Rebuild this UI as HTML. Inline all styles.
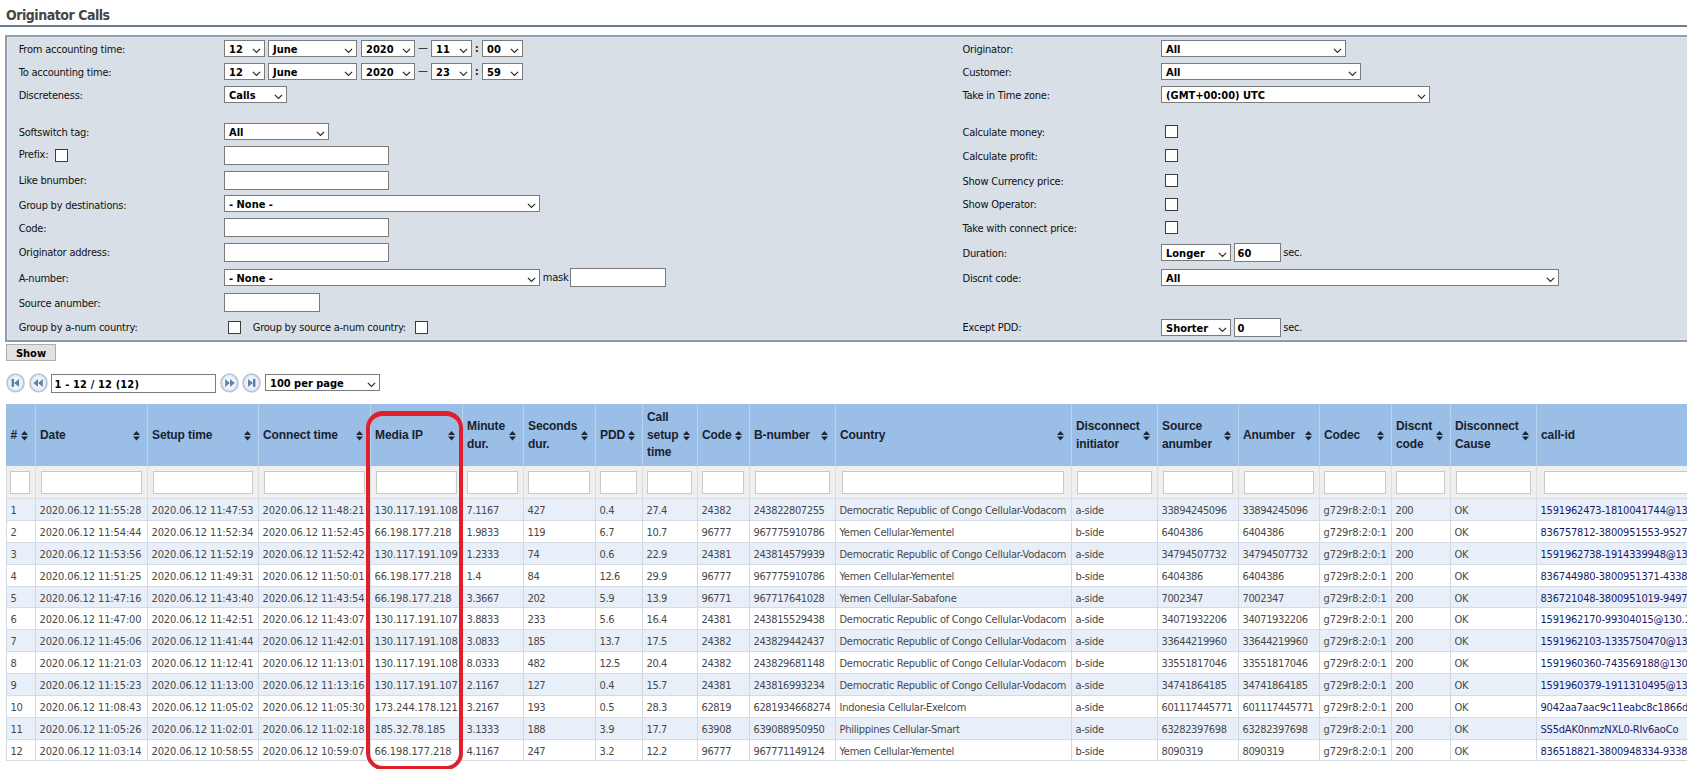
<!DOCTYPE html>
<html lang="en"><head><meta charset="utf-8"><title>Originator Calls</title>
<style>

html,body{margin:0;padding:0;}
body{width:1687px;height:769px;overflow:hidden;background:#fff;position:relative;
 font-family:"DejaVu Sans Condensed", "Liberation Sans", sans-serif;font-size:11px;letter-spacing:-0.22px;color:#111;}
.abs{position:absolute;}
h1{position:absolute;left:6px;top:6px;margin:0;font-size:14px;line-height:18px;font-weight:bold;color:#454545;letter-spacing:-0.47px;white-space:nowrap;}
.hr{position:absolute;left:0;top:25px;width:1687px;height:2px;background:#687c8f;}
.panel{position:absolute;left:5px;top:35px;width:1700px;height:307px;box-sizing:border-box;background:#d8dfe7;border:2px solid #8f9eae;border-bottom-color:#8b9baa;box-shadow:inset 0 0 0 1px #dfe7ef;}
.lb{position:absolute;white-space:nowrap;line-height:16px;height:16px;}
.sel{position:absolute;box-sizing:border-box;height:17px;border:1px solid #7b7b7b;background:#fff;font-weight:bold;color:#000;line-height:15px;padding:1px 0 0 4px;white-space:nowrap;overflow:hidden;letter-spacing:0;}
.sel svg{position:absolute;right:3.5px;top:7.4px;}
.inp{position:absolute;box-sizing:border-box;border:1px solid #7b7b7b;background:#fff;font-weight:bold;color:#000;padding-left:2.5px;white-space:nowrap;overflow:hidden;letter-spacing:0;}
.cb{position:absolute;box-sizing:border-box;width:13px;height:13px;border:1px solid #3c3c3c;background:#fff;}
.btn{position:absolute;box-sizing:border-box;border:1px solid #adadad;background:#e1e1e1;font-weight:bold;color:#000;text-align:center;letter-spacing:0;}
table{position:absolute;left:6px;top:404px;border-collapse:separate;border-spacing:0;table-layout:fixed;}
th{box-sizing:border-box;height:62px;background:#9bbee6;border-left:1px solid #b9d3ef;padding:1px 0 0 4px;text-align:left;vertical-align:middle;
 font-family:"Liberation Sans", sans-serif;font-size:12px;font-weight:bold;line-height:17.8px;color:#18222f;letter-spacing:-0.1px;white-space:nowrap;position:relative;}
th:first-child{border-left-color:#9bbee6;padding-left:3.5px;}
th svg{position:absolute;right:7px;top:27px;}
tr.f td{box-sizing:border-box;height:33px;background:#efefef;border-left:1px solid #dcdcdc;border-bottom:1px solid #d9dde3;padding:0;position:relative;}
tr.f td div{position:absolute;left:4px;right:5px;top:5px;height:23px;box-sizing:border-box;border:1px solid #c9c9c9;background:#fff;}
tr.r td{box-sizing:border-box;height:22px;border-left:1px solid #d3d9e1;border-bottom:1px solid #d5dbe4;padding:3px 0 0 3.5px;white-space:nowrap;overflow:hidden;color:#484848;line-height:18px;vertical-align:top;}
tr.s td{height:21px;line-height:17px;}
tr.r td.d{letter-spacing:-0.12px;}
tr.r td.n{letter-spacing:-0.38px;}
tr.r td.t{letter-spacing:-0.26px;}
tr.r td.c{letter-spacing:-0.1px;}
tr.r td.l{letter-spacing:-0.2px;}
tr.o td{background:#e8eff9;}
tr.r td.l{color:#1a1a6a;}
.red{position:absolute;left:365.5px;top:410.5px;width:97px;height:359.5px;box-sizing:border-box;border:4.7px solid #e01f2b;border-top-width:5.3px;border-radius:17px;}

</style></head><body>
<svg width="0" height="0" style="position:absolute"><defs><radialGradient id="pg" cx="50%" cy="50%" r="50%"><stop offset="0" stop-color="#ffffff"/><stop offset="0.55" stop-color="#f1f6fd"/><stop offset="1" stop-color="#d3e3f7"/></radialGradient></defs></svg>
<h1>Originator Calls</h1>
<div class="hr"></div>
<div class="panel"></div>
<div class="lb" style="left:18.7px;top:42px">From accounting time:</div>
<div class="lb" style="left:18.7px;top:65px">To accounting time:</div>
<div class="lb" style="left:18.7px;top:88px">Discreteness:</div>
<div class="lb" style="left:18.7px;top:125px">Softswitch tag:</div>
<div class="lb" style="left:18.7px;top:147px">Prefix:</div>
<div class="lb" style="left:18.7px;top:173px">Like bnumber:</div>
<div class="lb" style="left:18.7px;top:198px">Group by destinations:</div>
<div class="lb" style="left:18.7px;top:221px">Code:</div>
<div class="lb" style="left:18.7px;top:245px">Originator address:</div>
<div class="lb" style="left:18.7px;top:271px">A-number:</div>
<div class="lb" style="left:18.7px;top:296px">Source anumber:</div>
<div class="lb" style="left:18.7px;top:320px">Group by a-num country:</div>
<div class="sel" style="left:224px;top:40px;width:41px">12<svg width="9" height="6" viewBox="0 0 9 6"><path d="M0.9 0.9 L4.5 4.5 L8.1 0.9" fill="none" stroke="#262626" stroke-width="1.15"/></svg></div>
<div class="sel" style="left:268px;top:40px;width:89px">June<svg width="9" height="6" viewBox="0 0 9 6"><path d="M0.9 0.9 L4.5 4.5 L8.1 0.9" fill="none" stroke="#262626" stroke-width="1.15"/></svg></div>
<div class="sel" style="left:361px;top:40px;width:54px">2020<svg width="9" height="6" viewBox="0 0 9 6"><path d="M0.9 0.9 L4.5 4.5 L8.1 0.9" fill="none" stroke="#262626" stroke-width="1.15"/></svg></div>
<div class="lb" style="left:418px;top:40px;letter-spacing:0">—</div>
<div class="sel" style="left:431px;top:40px;width:41px">11<svg width="9" height="6" viewBox="0 0 9 6"><path d="M0.9 0.9 L4.5 4.5 L8.1 0.9" fill="none" stroke="#262626" stroke-width="1.15"/></svg></div>
<div class="lb" style="left:475px;top:41px;font-weight:bold;font-size:10px">:</div>
<div class="sel" style="left:482px;top:40px;width:41px">00<svg width="9" height="6" viewBox="0 0 9 6"><path d="M0.9 0.9 L4.5 4.5 L8.1 0.9" fill="none" stroke="#262626" stroke-width="1.15"/></svg></div>
<div class="sel" style="left:224px;top:63px;width:41px">12<svg width="9" height="6" viewBox="0 0 9 6"><path d="M0.9 0.9 L4.5 4.5 L8.1 0.9" fill="none" stroke="#262626" stroke-width="1.15"/></svg></div>
<div class="sel" style="left:268px;top:63px;width:89px">June<svg width="9" height="6" viewBox="0 0 9 6"><path d="M0.9 0.9 L4.5 4.5 L8.1 0.9" fill="none" stroke="#262626" stroke-width="1.15"/></svg></div>
<div class="sel" style="left:361px;top:63px;width:54px">2020<svg width="9" height="6" viewBox="0 0 9 6"><path d="M0.9 0.9 L4.5 4.5 L8.1 0.9" fill="none" stroke="#262626" stroke-width="1.15"/></svg></div>
<div class="lb" style="left:418px;top:63px;letter-spacing:0">—</div>
<div class="sel" style="left:431px;top:63px;width:41px">23<svg width="9" height="6" viewBox="0 0 9 6"><path d="M0.9 0.9 L4.5 4.5 L8.1 0.9" fill="none" stroke="#262626" stroke-width="1.15"/></svg></div>
<div class="lb" style="left:475px;top:64px;font-weight:bold;font-size:10px">:</div>
<div class="sel" style="left:482px;top:63px;width:41px">59<svg width="9" height="6" viewBox="0 0 9 6"><path d="M0.9 0.9 L4.5 4.5 L8.1 0.9" fill="none" stroke="#262626" stroke-width="1.15"/></svg></div>
<div class="sel" style="left:224px;top:86px;width:63px">Calls<svg width="9" height="6" viewBox="0 0 9 6"><path d="M0.9 0.9 L4.5 4.5 L8.1 0.9" fill="none" stroke="#262626" stroke-width="1.15"/></svg></div>
<div class="sel" style="left:224px;top:123px;width:105px">All<svg width="9" height="6" viewBox="0 0 9 6"><path d="M0.9 0.9 L4.5 4.5 L8.1 0.9" fill="none" stroke="#262626" stroke-width="1.15"/></svg></div>
<div class="cb" style="left:55px;top:149px"></div>
<div class="inp" style="left:224px;top:146px;width:165px;height:19px;line-height:17px;padding-top:1px;letter-spacing:0px"></div>
<div class="inp" style="left:224px;top:171px;width:165px;height:19px;line-height:17px;padding-top:1px;letter-spacing:0px"></div>
<div class="sel" style="left:224px;top:195px;width:316px">- None -<svg width="9" height="6" viewBox="0 0 9 6"><path d="M0.9 0.9 L4.5 4.5 L8.1 0.9" fill="none" stroke="#262626" stroke-width="1.15"/></svg></div>
<div class="inp" style="left:224px;top:218px;width:165px;height:19px;line-height:17px;padding-top:1px;letter-spacing:0px"></div>
<div class="inp" style="left:224px;top:243px;width:165px;height:19px;line-height:17px;padding-top:1px;letter-spacing:0px"></div>
<div class="sel" style="left:224px;top:269px;width:316px">- None -<svg width="9" height="6" viewBox="0 0 9 6"><path d="M0.9 0.9 L4.5 4.5 L8.1 0.9" fill="none" stroke="#262626" stroke-width="1.15"/></svg></div>
<div class="lb" style="left:542.8px;top:270px">mask</div>
<div class="inp" style="left:570px;top:268px;width:96px;height:19px;line-height:17px;padding-top:1px;letter-spacing:0px"></div>
<div class="inp" style="left:224px;top:293px;width:96px;height:19px;line-height:17px;padding-top:1px;letter-spacing:0px"></div>
<div class="cb" style="left:228px;top:321px"></div>
<div class="lb" style="left:252.7px;top:320px">Group by source a-num country:</div>
<div class="cb" style="left:415px;top:321px"></div>
<div class="lb" style="left:962.5px;top:42px">Originator:</div>
<div class="lb" style="left:962.5px;top:65px">Customer:</div>
<div class="lb" style="left:962.5px;top:88px">Take in Time zone:</div>
<div class="lb" style="left:962.5px;top:125px">Calculate money:</div>
<div class="lb" style="left:962.5px;top:149px">Calculate profit:</div>
<div class="lb" style="left:962.5px;top:174px">Show Currency price:</div>
<div class="lb" style="left:962.5px;top:197px">Show Operator:</div>
<div class="lb" style="left:962.5px;top:221px">Take with connect price:</div>
<div class="lb" style="left:962.5px;top:246px">Duration:</div>
<div class="lb" style="left:962.5px;top:271px">Discnt code:</div>
<div class="lb" style="left:962.5px;top:320px">Except PDD:</div>
<div class="sel" style="left:1161px;top:40px;width:185px">All<svg width="9" height="6" viewBox="0 0 9 6"><path d="M0.9 0.9 L4.5 4.5 L8.1 0.9" fill="none" stroke="#262626" stroke-width="1.15"/></svg></div>
<div class="sel" style="left:1161px;top:63px;width:200px">All<svg width="9" height="6" viewBox="0 0 9 6"><path d="M0.9 0.9 L4.5 4.5 L8.1 0.9" fill="none" stroke="#262626" stroke-width="1.15"/></svg></div>
<div class="sel" style="left:1161px;top:86px;width:269px">(GMT+00:00) UTC<svg width="9" height="6" viewBox="0 0 9 6"><path d="M0.9 0.9 L4.5 4.5 L8.1 0.9" fill="none" stroke="#262626" stroke-width="1.15"/></svg></div>
<div class="cb" style="left:1165px;top:125px"></div>
<div class="cb" style="left:1165px;top:149px"></div>
<div class="cb" style="left:1165px;top:174px"></div>
<div class="cb" style="left:1165px;top:198px"></div>
<div class="cb" style="left:1165px;top:221px"></div>
<div class="sel" style="left:1161px;top:244px;width:70px">Longer<svg width="9" height="6" viewBox="0 0 9 6"><path d="M0.9 0.9 L4.5 4.5 L8.1 0.9" fill="none" stroke="#262626" stroke-width="1.15"/></svg></div>
<div class="inp" style="left:1234px;top:243px;width:47px;height:19px;line-height:17px;padding-top:1px;letter-spacing:0px">60</div>
<div class="lb" style="left:1283.3px;top:245px">sec.</div>
<div class="sel" style="left:1161px;top:269px;width:398px">All<svg width="9" height="6" viewBox="0 0 9 6"><path d="M0.9 0.9 L4.5 4.5 L8.1 0.9" fill="none" stroke="#262626" stroke-width="1.15"/></svg></div>
<div class="sel" style="left:1161px;top:319px;width:70px">Shorter<svg width="9" height="6" viewBox="0 0 9 6"><path d="M0.9 0.9 L4.5 4.5 L8.1 0.9" fill="none" stroke="#262626" stroke-width="1.15"/></svg></div>
<div class="inp" style="left:1234px;top:318px;width:47px;height:19px;line-height:17px;padding-top:1px;letter-spacing:0px">0</div>
<div class="lb" style="left:1283.3px;top:320px">sec.</div>
<div class="btn" style="left:6px;top:344px;width:50px;height:17px;line-height:15px;padding-top:1px">Show</div>
<svg class="abs" style="left:5.800000000000001px;top:373px" width="19" height="20" viewBox="0 0 19 20"><ellipse cx="9.5" cy="9.9" rx="8.5" ry="8.9" fill="url(#pg)" stroke="#bcc4d0" stroke-width="1.6"/><g transform="translate(0,0.4)"><rect x="5.6" y="5.5" width="2.5" height="8" fill="#5d82aa"/><path d="M13 5.5 L13 13.5 L8.1 9.5Z" fill="#5d82aa"/></g></svg>
<svg class="abs" style="left:28.700000000000003px;top:373px" width="19" height="20" viewBox="0 0 19 20"><ellipse cx="9.5" cy="9.9" rx="8.5" ry="8.9" fill="url(#pg)" stroke="#bcc4d0" stroke-width="1.6"/><g transform="translate(0,0.4)"><path d="M9 5.5 L9 13.5 L4.3 9.5Z M13.8 5.5 L13.8 13.5 L9.1 9.5Z" fill="#5d82aa"/></g></svg>
<div class="inp" style="left:51px;top:374px;width:165px;height:19px;line-height:17px;padding-top:1px;letter-spacing:0.15px">1 - 12 / 12 (12)</div>
<svg class="abs" style="left:219.5px;top:373px" width="19" height="20" viewBox="0 0 19 20"><ellipse cx="9.5" cy="9.9" rx="8.5" ry="8.9" fill="url(#pg)" stroke="#bcc4d0" stroke-width="1.6"/><g transform="translate(0,0.4)"><path d="M5.2 5.5 L5.2 13.5 L9.9 9.5Z M10 5.5 L10 13.5 L14.7 9.5Z" fill="#5d82aa"/></g></svg>
<svg class="abs" style="left:241.8px;top:373px" width="19" height="20" viewBox="0 0 19 20"><ellipse cx="9.5" cy="9.9" rx="8.5" ry="8.9" fill="url(#pg)" stroke="#bcc4d0" stroke-width="1.6"/><g transform="translate(0,0.4)"><rect x="10.9" y="5.5" width="2.5" height="8" fill="#5d82aa"/><path d="M6 5.5 L6 13.5 L10.9 9.5Z" fill="#5d82aa"/></g></svg>
<div class="sel" style="left:265px;top:374px;width:115px">100 per page<svg width="9" height="6" viewBox="0 0 9 6"><path d="M0.9 0.9 L4.5 4.5 L8.1 0.9" fill="none" stroke="#262626" stroke-width="1.15"/></svg></div>
<table style="width:1754px"><colgroup>
<col style="width:29px">
<col style="width:112px">
<col style="width:111px">
<col style="width:112px">
<col style="width:92px">
<col style="width:61px">
<col style="width:72px">
<col style="width:47px">
<col style="width:55px">
<col style="width:52px">
<col style="width:86px">
<col style="width:236px">
<col style="width:86px">
<col style="width:81px">
<col style="width:81px">
<col style="width:72px">
<col style="width:59px">
<col style="width:86px">
<col style="width:224px">
</colgroup>
<tr>
<th>#<svg width="7" height="10" viewBox="0 0 7 10"><path d="M0 4 L3.5 0 L7 4Z M0 5.6 L7 5.6 L3.5 9.6Z" fill="#1b2636"/></svg></th>
<th>Date<svg width="7" height="10" viewBox="0 0 7 10"><path d="M0 4 L3.5 0 L7 4Z M0 5.6 L7 5.6 L3.5 9.6Z" fill="#1b2636"/></svg></th>
<th>Setup time<svg width="7" height="10" viewBox="0 0 7 10"><path d="M0 4 L3.5 0 L7 4Z M0 5.6 L7 5.6 L3.5 9.6Z" fill="#1b2636"/></svg></th>
<th>Connect time<svg width="7" height="10" viewBox="0 0 7 10"><path d="M0 4 L3.5 0 L7 4Z M0 5.6 L7 5.6 L3.5 9.6Z" fill="#1b2636"/></svg></th>
<th>Media IP<svg width="7" height="10" viewBox="0 0 7 10"><path d="M0 4 L3.5 0 L7 4Z M0 5.6 L7 5.6 L3.5 9.6Z" fill="#1b2636"/></svg></th>
<th>Minute<br>dur.<svg width="7" height="10" viewBox="0 0 7 10"><path d="M0 4 L3.5 0 L7 4Z M0 5.6 L7 5.6 L3.5 9.6Z" fill="#1b2636"/></svg></th>
<th>Seconds<br>dur.<svg width="7" height="10" viewBox="0 0 7 10"><path d="M0 4 L3.5 0 L7 4Z M0 5.6 L7 5.6 L3.5 9.6Z" fill="#1b2636"/></svg></th>
<th>PDD<svg width="7" height="10" viewBox="0 0 7 10"><path d="M0 4 L3.5 0 L7 4Z M0 5.6 L7 5.6 L3.5 9.6Z" fill="#1b2636"/></svg></th>
<th>Call<br>setup<br>time<svg width="7" height="10" viewBox="0 0 7 10"><path d="M0 4 L3.5 0 L7 4Z M0 5.6 L7 5.6 L3.5 9.6Z" fill="#1b2636"/></svg></th>
<th>Code<svg width="7" height="10" viewBox="0 0 7 10"><path d="M0 4 L3.5 0 L7 4Z M0 5.6 L7 5.6 L3.5 9.6Z" fill="#1b2636"/></svg></th>
<th>B-number<svg width="7" height="10" viewBox="0 0 7 10"><path d="M0 4 L3.5 0 L7 4Z M0 5.6 L7 5.6 L3.5 9.6Z" fill="#1b2636"/></svg></th>
<th>Country<svg width="7" height="10" viewBox="0 0 7 10"><path d="M0 4 L3.5 0 L7 4Z M0 5.6 L7 5.6 L3.5 9.6Z" fill="#1b2636"/></svg></th>
<th>Disconnect<br>initiator<svg width="7" height="10" viewBox="0 0 7 10"><path d="M0 4 L3.5 0 L7 4Z M0 5.6 L7 5.6 L3.5 9.6Z" fill="#1b2636"/></svg></th>
<th>Source<br>anumber<svg width="7" height="10" viewBox="0 0 7 10"><path d="M0 4 L3.5 0 L7 4Z M0 5.6 L7 5.6 L3.5 9.6Z" fill="#1b2636"/></svg></th>
<th>Anumber<svg width="7" height="10" viewBox="0 0 7 10"><path d="M0 4 L3.5 0 L7 4Z M0 5.6 L7 5.6 L3.5 9.6Z" fill="#1b2636"/></svg></th>
<th>Codec<svg width="7" height="10" viewBox="0 0 7 10"><path d="M0 4 L3.5 0 L7 4Z M0 5.6 L7 5.6 L3.5 9.6Z" fill="#1b2636"/></svg></th>
<th>Discnt<br>code<svg width="7" height="10" viewBox="0 0 7 10"><path d="M0 4 L3.5 0 L7 4Z M0 5.6 L7 5.6 L3.5 9.6Z" fill="#1b2636"/></svg></th>
<th>Disconnect<br>Cause<svg width="7" height="10" viewBox="0 0 7 10"><path d="M0 4 L3.5 0 L7 4Z M0 5.6 L7 5.6 L3.5 9.6Z" fill="#1b2636"/></svg></th>
<th>call-id</th>
</tr>
<tr class="f">
<td><div style="left:3px;right:5px"></div></td>
<td><div style="left:5px;right:5px"></div></td>
<td><div style="left:5px;right:5px"></div></td>
<td><div style="left:5px;right:5px"></div></td>
<td><div style="left:5px;right:5px"></div></td>
<td><div style="left:4px;right:5px"></div></td>
<td><div style="left:4px;right:5px"></div></td>
<td><div style="left:4px;right:5px"></div></td>
<td><div style="left:4px;right:5px"></div></td>
<td><div style="left:4px;right:5px"></div></td>
<td><div style="left:5px;right:5px"></div></td>
<td><div style="left:6px;right:7px"></div></td>
<td><div style="left:5px;right:5px"></div></td>
<td><div style="left:5px;right:5px"></div></td>
<td><div style="left:5px;right:5px"></div></td>
<td><div style="left:4px;right:5px"></div></td>
<td><div style="left:4px;right:5px"></div></td>
<td><div style="left:5px;right:5px"></div></td>
<td><div style="left:7px;right:5px"></div></td>
</tr>
<tr class="r o">
<td class="n">1</td>
<td class="d">2020.06.12 11:55:28</td>
<td class="d">2020.06.12 11:47:53</td>
<td class="d">2020.06.12 11:48:21</td>
<td class="d">130.117.191.108</td>
<td class="n">7.1167</td>
<td class="n">427</td>
<td class="n">0.4</td>
<td class="n">27.4</td>
<td class="n">24382</td>
<td class="n">243822807255</td>
<td class="t">Democratic Republic of Congo Cellular-Vodacom</td>
<td class="t">a-side</td>
<td class="n">33894245096</td>
<td class="n">33894245096</td>
<td class="c">g729r8:2:0:1</td>
<td class="n">200</td>
<td class="t">OK</td>
<td class="l">1591962473-1810041744@130.117.191.108</td>
</tr>
<tr class="r">
<td class="n">2</td>
<td class="d">2020.06.12 11:54:44</td>
<td class="d">2020.06.12 11:52:34</td>
<td class="d">2020.06.12 11:52:45</td>
<td class="d">66.198.177.218</td>
<td class="n">1.9833</td>
<td class="n">119</td>
<td class="n">6.7</td>
<td class="n">10.7</td>
<td class="n">96777</td>
<td class="n">967775910786</td>
<td class="t">Yemen Cellular-Yementel</td>
<td class="t">b-side</td>
<td class="n">6404386</td>
<td class="n">6404386</td>
<td class="c">g729r8:2:0:1</td>
<td class="n">200</td>
<td class="t">OK</td>
<td class="l">836757812-3800951553-952748</td>
</tr>
<tr class="r o">
<td class="n">3</td>
<td class="d">2020.06.12 11:53:56</td>
<td class="d">2020.06.12 11:52:19</td>
<td class="d">2020.06.12 11:52:42</td>
<td class="d">130.117.191.109</td>
<td class="n">1.2333</td>
<td class="n">74</td>
<td class="n">0.6</td>
<td class="n">22.9</td>
<td class="n">24381</td>
<td class="n">243814579939</td>
<td class="t">Democratic Republic of Congo Cellular-Vodacom</td>
<td class="t">a-side</td>
<td class="n">34794507732</td>
<td class="n">34794507732</td>
<td class="c">g729r8:2:0:1</td>
<td class="n">200</td>
<td class="t">OK</td>
<td class="l">1591962738-1914339948@130.117.191.109</td>
</tr>
<tr class="r">
<td class="n">4</td>
<td class="d">2020.06.12 11:51:25</td>
<td class="d">2020.06.12 11:49:31</td>
<td class="d">2020.06.12 11:50:01</td>
<td class="d">66.198.177.218</td>
<td class="n">1.4</td>
<td class="n">84</td>
<td class="n">12.6</td>
<td class="n">29.9</td>
<td class="n">96777</td>
<td class="n">967775910786</td>
<td class="t">Yemen Cellular-Yementel</td>
<td class="t">b-side</td>
<td class="n">6404386</td>
<td class="n">6404386</td>
<td class="c">g729r8:2:0:1</td>
<td class="n">200</td>
<td class="t">OK</td>
<td class="l">836744980-3800951371-433875</td>
</tr>
<tr class="r o s">
<td class="n">5</td>
<td class="d">2020.06.12 11:47:16</td>
<td class="d">2020.06.12 11:43:40</td>
<td class="d">2020.06.12 11:43:54</td>
<td class="d">66.198.177.218</td>
<td class="n">3.3667</td>
<td class="n">202</td>
<td class="n">5.9</td>
<td class="n">13.9</td>
<td class="n">96771</td>
<td class="n">967717641028</td>
<td class="t">Yemen Cellular-Sabafone</td>
<td class="t">a-side</td>
<td class="n">7002347</td>
<td class="n">7002347</td>
<td class="c">g729r8:2:0:1</td>
<td class="n">200</td>
<td class="t">OK</td>
<td class="l">836721048-3800951019-949712</td>
</tr>
<tr class="r">
<td class="n">6</td>
<td class="d">2020.06.12 11:47:00</td>
<td class="d">2020.06.12 11:42:51</td>
<td class="d">2020.06.12 11:43:07</td>
<td class="d">130.117.191.107</td>
<td class="n">3.8833</td>
<td class="n">233</td>
<td class="n">5.6</td>
<td class="n">16.4</td>
<td class="n">24381</td>
<td class="n">243815529438</td>
<td class="t">Democratic Republic of Congo Cellular-Vodacom</td>
<td class="t">a-side</td>
<td class="n">34071932206</td>
<td class="n">34071932206</td>
<td class="c">g729r8:2:0:1</td>
<td class="n">200</td>
<td class="t">OK</td>
<td class="l">1591962170-99304015@130.117.191.107</td>
</tr>
<tr class="r o">
<td class="n">7</td>
<td class="d">2020.06.12 11:45:06</td>
<td class="d">2020.06.12 11:41:44</td>
<td class="d">2020.06.12 11:42:01</td>
<td class="d">130.117.191.108</td>
<td class="n">3.0833</td>
<td class="n">185</td>
<td class="n">13.7</td>
<td class="n">17.5</td>
<td class="n">24382</td>
<td class="n">243829442437</td>
<td class="t">Democratic Republic of Congo Cellular-Vodacom</td>
<td class="t">a-side</td>
<td class="n">33644219960</td>
<td class="n">33644219960</td>
<td class="c">g729r8:2:0:1</td>
<td class="n">200</td>
<td class="t">OK</td>
<td class="l">1591962103-1335750470@130.117.191.108</td>
</tr>
<tr class="r">
<td class="n">8</td>
<td class="d">2020.06.12 11:21:03</td>
<td class="d">2020.06.12 11:12:41</td>
<td class="d">2020.06.12 11:13:01</td>
<td class="d">130.117.191.108</td>
<td class="n">8.0333</td>
<td class="n">482</td>
<td class="n">12.5</td>
<td class="n">20.4</td>
<td class="n">24382</td>
<td class="n">243829681148</td>
<td class="t">Democratic Republic of Congo Cellular-Vodacom</td>
<td class="t">b-side</td>
<td class="n">33551817046</td>
<td class="n">33551817046</td>
<td class="c">g729r8:2:0:1</td>
<td class="n">200</td>
<td class="t">OK</td>
<td class="l">1591960360-743569188@130.117.191.108</td>
</tr>
<tr class="r o">
<td class="n">9</td>
<td class="d">2020.06.12 11:15:23</td>
<td class="d">2020.06.12 11:13:00</td>
<td class="d">2020.06.12 11:13:16</td>
<td class="d">130.117.191.107</td>
<td class="n">2.1167</td>
<td class="n">127</td>
<td class="n">0.4</td>
<td class="n">15.7</td>
<td class="n">24381</td>
<td class="n">243816993234</td>
<td class="t">Democratic Republic of Congo Cellular-Vodacom</td>
<td class="t">a-side</td>
<td class="n">34741864185</td>
<td class="n">34741864185</td>
<td class="c">g729r8:2:0:1</td>
<td class="n">200</td>
<td class="t">OK</td>
<td class="l">1591960379-1911310495@130.117.191.107</td>
</tr>
<tr class="r">
<td class="n">10</td>
<td class="d">2020.06.12 11:08:43</td>
<td class="d">2020.06.12 11:05:02</td>
<td class="d">2020.06.12 11:05:30</td>
<td class="d">173.244.178.121</td>
<td class="n">3.2167</td>
<td class="n">193</td>
<td class="n">0.5</td>
<td class="n">28.3</td>
<td class="n">62819</td>
<td class="n">6281934668274</td>
<td class="t">Indonesia Cellular-Exelcom</td>
<td class="t">a-side</td>
<td class="n">601117445771</td>
<td class="n">601117445771</td>
<td class="c">g729r8:2:0:1</td>
<td class="n">200</td>
<td class="t">OK</td>
<td class="l">9042aa7aac9c11eabc8c1866da</td>
</tr>
<tr class="r o">
<td class="n">11</td>
<td class="d">2020.06.12 11:05:26</td>
<td class="d">2020.06.12 11:02:01</td>
<td class="d">2020.06.12 11:02:18</td>
<td class="d">185.32.78.185</td>
<td class="n">3.1333</td>
<td class="n">188</td>
<td class="n">3.9</td>
<td class="n">17.7</td>
<td class="n">63908</td>
<td class="n">639088950950</td>
<td class="t">Philippines Cellular-Smart</td>
<td class="t">a-side</td>
<td class="n">63282397698</td>
<td class="n">63282397698</td>
<td class="c">g729r8:2:0:1</td>
<td class="n">200</td>
<td class="t">OK</td>
<td class="l">SS5dAK0nmzNXL0-RIv6aoCo</td>
</tr>
<tr class="r s">
<td class="n">12</td>
<td class="d">2020.06.12 11:03:14</td>
<td class="d">2020.06.12 10:58:55</td>
<td class="d">2020.06.12 10:59:07</td>
<td class="d">66.198.177.218</td>
<td class="n">4.1167</td>
<td class="n">247</td>
<td class="n">3.2</td>
<td class="n">12.2</td>
<td class="n">96777</td>
<td class="n">967771149124</td>
<td class="t">Yemen Cellular-Yementel</td>
<td class="t">b-side</td>
<td class="n">8090319</td>
<td class="n">8090319</td>
<td class="c">g729r8:2:0:1</td>
<td class="n">200</td>
<td class="t">OK</td>
<td class="l">836518821-3800948334-933871</td>
</tr>
</table>
<div class="red"></div>
</body></html>
